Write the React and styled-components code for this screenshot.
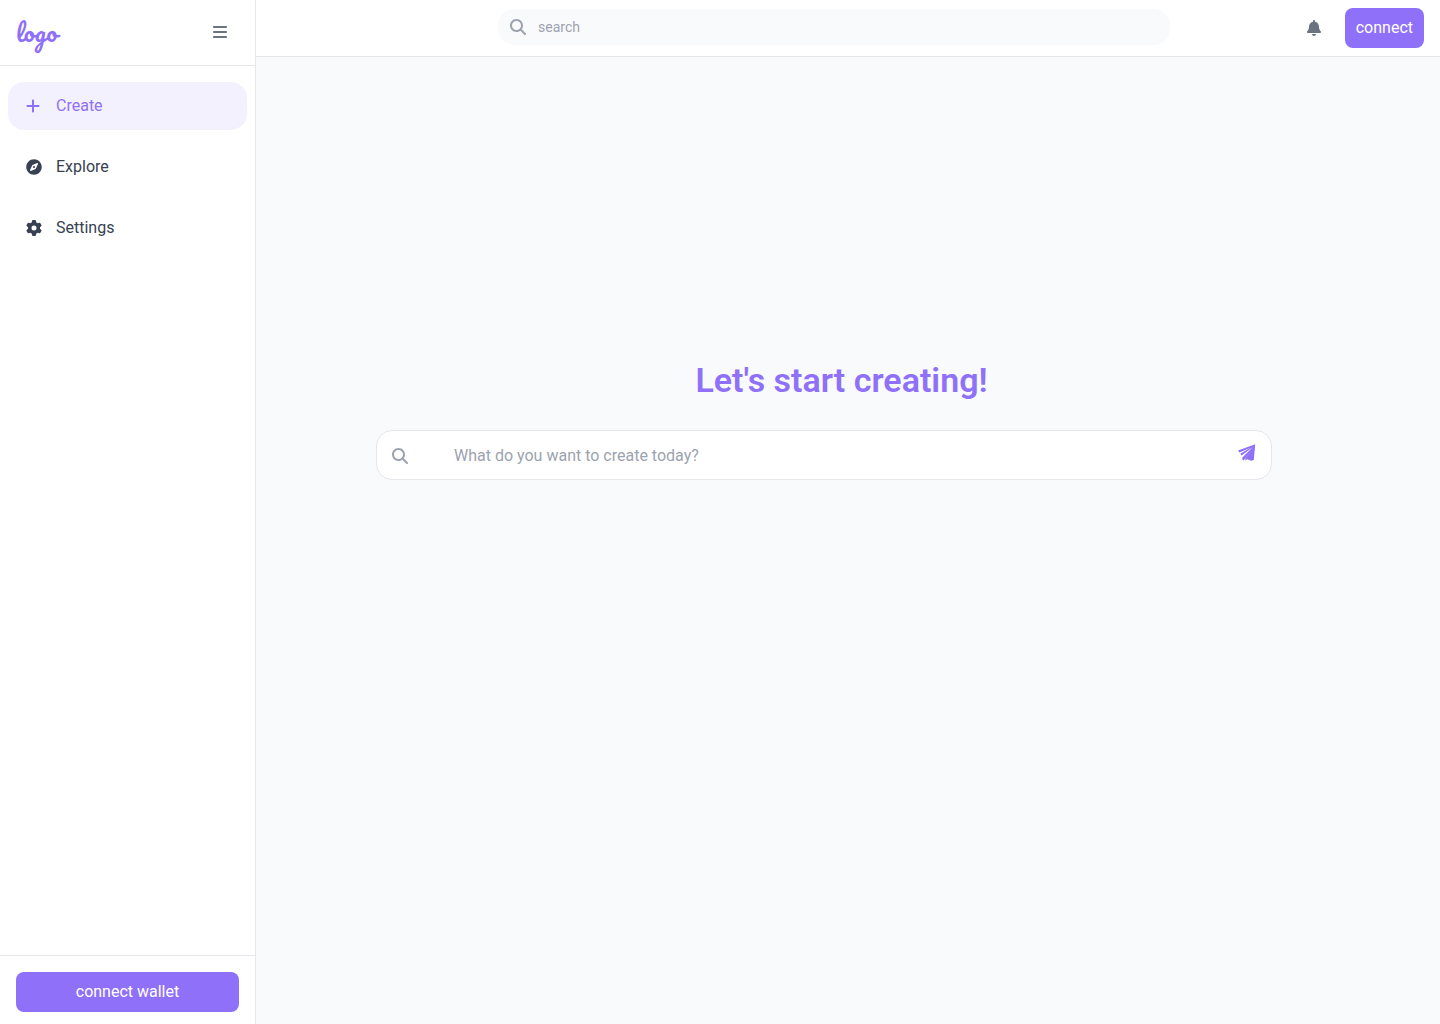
import React from "react";
import styled, { createGlobalStyle } from "styled-components";
import { FaBell, FaCompass } from "react-icons/fa";
import { FaBars, FaGear, FaMagnifyingGlass, FaPlus } from "react-icons/fa6";

const items = [
  { name: "Create", icon: FaPlus, width: 14, active: true },
  { name: "Explore", icon: FaCompass, width: 16 },
  { name: "Settings", icon: FaGear, width: 16 },
];

function PaperPlane() {
  return (
    <svg width="18" height="18" viewBox="0 0 18 18" fill="currentColor" aria-hidden="true">
      <path d="M16.6.4 0 6.6l1.4 2L12.4 3.8 2.2 9.8l1.4 1.8L15 3 4.4 13.4v2.6l1.4.3L15.4 4.2 7.4 14.4v2.4l1.6-1.6 4.4 1.6 2.4-.8L17.2.6z" />
    </svg>
  );
}

function App() {
  return (
    <>
      <GlobalStyle />
      <Layout>
        <Sidebar>
          <SidebarTop>
            <Logo href="#">logo</Logo>
            <IconButton aria-label="menu">
              <FaBars />
            </IconButton>
          </SidebarTop>
          <Menu>
            {items.map(({ name, icon: Icon, width, active }) => (
              <MenuItem key={name} href="#" $active={active}>
                <MenuIcon $width={width}>
                  <Icon />
                </MenuIcon>
                {name}
              </MenuItem>
            ))}
          </Menu>
          <SidebarBottom>
            <PrimaryButton $wide>connect wallet</PrimaryButton>
          </SidebarBottom>
        </Sidebar>
        <Content>
          <Header>
            <SearchBox>
              <FaMagnifyingGlass />
              <SearchInput type="search" aria-label="search" placeholder="search" />
            </SearchBox>
            <Actions>
              <IconButton aria-label="notifications">
                <FaBell />
              </IconButton>
              <PrimaryButton>connect</PrimaryButton>
            </Actions>
          </Header>
          <Main>
            <Title>Let's start creating!</Title>
            <Prompt onSubmit={(e) => e.preventDefault()}>
              <FaMagnifyingGlass />
              <PromptInput
                type="text"
                aria-label="prompt"
                placeholder="What do you want to create today?"
              />
              <SendButton aria-label="send">
                <PaperPlane />
              </SendButton>
            </Prompt>
          </Main>
        </Content>
      </Layout>
    </>
  );
}

export default App;

const GlobalStyle = createGlobalStyle`
* {
  box-sizing: border-box;
}
body {
  margin: 0;
  font-family: Roboto, sans-serif;
  font-size: 16px;
  line-height: 24px;
  color: #374151;
  background-color: #f9fafc;
}
button, input {
  font: inherit;
}
`;

const Layout = styled.div`
  display: flex;
  min-height: 100vh;
`;

const Sidebar = styled.aside`
  display: flex;
  flex-direction: column;
  flex: 0 0 256px;
  background-color: white;
  border-right: 1px solid #e5e7eb;
`;

const SidebarTop = styled.div`
  display: flex;
  align-items: center;
  justify-content: space-between;
  height: 66px;
  padding: 0 20px 2px 16px;
  border-bottom: 1px solid #e5e7eb;
`;

const Logo = styled.a`
  font-family: Pacifico, cursive;
  font-size: 24px;
  line-height: 32px;
  font-feature-settings: "calt" 0;
  color: #8f70f8;
  text-decoration: none;
`;

const IconButton = styled.button`
  display: flex;
  align-items: center;
  justify-content: center;
  width: 30px;
  height: 32px;
  padding: 0;
  border: none;
  background: none;
  color: #6b7280;
  cursor: pointer;
`;

const Menu = styled.nav`
  display: flex;
  flex-direction: column;
  flex: 1;
  gap: 13px;
  padding: 16px 8px;
`;

const MenuItem = styled.a`
  display: flex;
  align-items: center;
  height: 48px;
  padding: 0 18px;
  border-radius: 16px;
  color: ${(props) => (props.$active ? "#8f70f8" : "#374151")};
  background-color: ${(props) => (props.$active ? "#f4f1fe" : "transparent")};
  text-decoration: none;
`;

const MenuIcon = styled.span`
  display: flex;
  width: 30px;
  svg {
    width: ${(props) => props.$width}px;
  }
`;

const SidebarBottom = styled.div`
  padding: 16px 16px 12px;
  border-top: 1px solid #e5e7eb;
`;

const PrimaryButton = styled.button`
  width: ${(props) => (props.$wide ? "100%" : "auto")};
  height: 40px;
  padding: 0 11px;
  border: none;
  border-radius: 8px;
  background-color: #8f70f8;
  color: white;
  cursor: pointer;
`;

const Content = styled.div`
  display: flex;
  flex-direction: column;
  flex: 1;
  min-width: 0;
`;

const Header = styled.header`
  display: flex;
  align-items: center;
  justify-content: space-between;
  height: 57px;
  padding: 0 16px 0 242px;
  background-color: white;
  border-bottom: 1px solid #e5e7eb;
`;

const SearchBox = styled.div`
  display: flex;
  align-items: center;
  flex: 0 1 672px;
  gap: 12px;
  height: 36px;
  margin-bottom: 2px;
  padding: 0 12px;
  border-radius: 16px;
  background-color: #f9fafc;
  color: #9ca3af;
`;

const SearchInput = styled.input`
  flex: 1;
  min-width: 0;
  padding: 0;
  border: none;
  outline: none;
  background: none;
  font-size: 14px;
  line-height: 20px;
  &::placeholder {
    color: #9ca3af;
  }
`;

const Actions = styled.div`
  display: flex;
  align-items: center;
  gap: 16px;
`;

const Main = styled.main`
  display: flex;
  flex-direction: column;
  align-items: center;
  padding: 303px 48px 32px 0;
`;

const Title = styled.h1`
  margin: 0 0 30px;
  padding-left: 35px;
  font-size: 34px;
  line-height: 40px;
  font-weight: 600;
  color: #8f70f8;
`;

const Prompt = styled.form`
  display: flex;
  align-items: center;
  width: 896px;
  max-width: 100%;
  height: 50px;
  padding: 1px 15px 0;
  border: 1px solid #e5e7eb;
  border-radius: 16px;
  background-color: white;
  color: #9ca3af;
`;

const PromptInput = styled.input`
  flex: 1;
  min-width: 0;
  margin-left: 46px;
  padding: 0;
  border: none;
  outline: none;
  background: none;
  &::placeholder {
    color: #9ca3af;
  }
`;

const SendButton = styled.button`
  display: flex;
  padding: 0 0 6px;
  border: none;
  background: none;
  color: #8f70f8;
  cursor: pointer;
`;
